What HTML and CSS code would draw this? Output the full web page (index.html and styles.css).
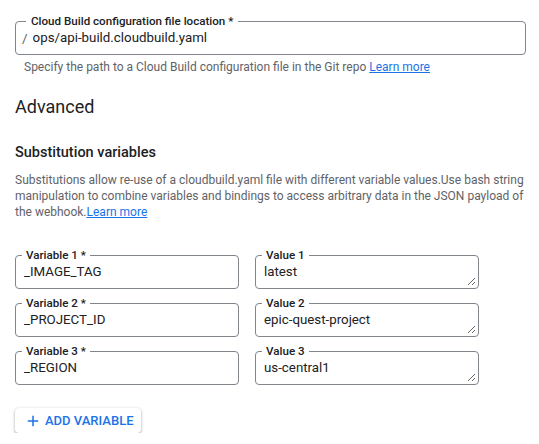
FILE: index.html
```html
<!DOCTYPE html>
<html lang="en">
<head>
<meta charset="utf-8">
<title>Cloud Build trigger – Advanced</title>
<link rel="stylesheet" href="styles.css">
</head>
<body>
<main class="page">
  <fieldset class="field field-wide">
    <legend class="field-label">Cloud Build configuration file location *</legend>
    <div class="input-row">
      <span class="prefix">/</span>
      <input class="field-input" type="text" value="ops/api-build.cloudbuild.yaml">
    </div>
  </fieldset>
  <p class="hint">Specify the path to a Cloud Build configuration file in the Git repo <a class="link" href="#">Learn more</a></p>

  <h2 class="section-title">Advanced</h2>
  <h3 class="subsection-title">Substitution variables</h3>
  <p class="desc">Substitutions allow re-use of a cloudbuild.yaml file with different variable values.Use bash string manipulation to combine variables and bindings to access arbitrary data in the JSON payload of the webhook.<a class="link" href="#">Learn more</a></p>

  <div class="vars">
    <fieldset class="field field-var">
      <legend class="field-label">Variable 1 *</legend>
      <input class="field-input" type="text" value="_IMAGE_TAG">
    </fieldset>
    <fieldset class="field field-val">
      <legend class="field-label">Value 1</legend>
      <textarea class="field-area" rows="1">latest</textarea>
    </fieldset>
    <fieldset class="field field-var">
      <legend class="field-label">Variable 2 *</legend>
      <input class="field-input" type="text" value="_PROJECT_ID">
    </fieldset>
    <fieldset class="field field-val">
      <legend class="field-label">Value 2</legend>
      <textarea class="field-area" rows="1">epic-quest-project</textarea>
    </fieldset>
    <fieldset class="field field-var">
      <legend class="field-label">Variable 3 *</legend>
      <input class="field-input" type="text" value="_REGION">
    </fieldset>
    <fieldset class="field field-val">
      <legend class="field-label">Value 3</legend>
      <textarea class="field-area" rows="1">us-central1</textarea>
    </fieldset>
  </div>

  <button class="add-btn" type="button">
    <svg class="add-icon" viewBox="0 0 24 24" width="18" height="18" aria-hidden="true"><path d="M19 13h-6v6h-2v-6H5v-2h6V5h2v6h6v2z" fill="currentColor"/></svg>
    <span>ADD VARIABLE</span>
  </button>
</main>
</body>
</html>
```

FILE: styles.css
```css
* { box-sizing: border-box; }

html, body {
  margin: 0;
  background: #ffffff;
}

body {
  font-family: Roboto, "Liberation Sans", Arial, sans-serif;
  color: #202124;
}

.page {
  padding: 14px 0 0 15px;
  display: flex;
  flex-direction: column;
  align-items: flex-start;
}

.field {
  margin: 0;
  min-width: 0;
  border: 1px solid #80868b;
  border-radius: 4px;
  padding: 0 2px 6px 8px;
}

.field-label {
  font-size: 11.6px;
  line-height: 14px;
  font-weight: 500;
  color: #202124;
  padding: 0 4px;
  margin-left: -2px;
}

.field-wide {
  width: 511px;
  padding-left: 6px;
}

.field-wide .field-label {
  margin-left: 4px;
  padding: 0 5px;
}

.input-row {
  display: flex;
  align-items: center;
  gap: 5px;
}

.prefix {
  font-size: 13.5px;
  line-height: 20px;
  color: #5f6368;
}

.field-input,
.field-area {
  display: block;
  width: 100%;
  border: 0;
  outline: 0;
  margin: 0;
  padding: 0;
  background: transparent;
  font-family: inherit;
  font-size: 13.3px;
  line-height: 20px;
  height: 20px;
  color: #202124;
}

.input-row .field-input { flex: 1; }

.field-val {
  padding-bottom: 2px;
}

.field-area {
  height: 24px;
  padding-bottom: 4px;
  resize: vertical;
  overflow: hidden;
}

.hint {
  margin: 4px 0 0 9px;
  font-size: 12px;
  line-height: 16px;
  color: #5f6368;
}

.link {
  color: #1a73e8;
  text-decoration: underline;
}

.section-title {
  margin: 20px 0 0;
  font-size: 18px;
  line-height: 24px;
  font-weight: 400;
  color: #202124;
}

.subsection-title {
  margin: 24px 0 0;
  font-size: 14.5px;
  line-height: 20px;
  font-weight: 500;
  color: #202124;
}

.desc {
  margin: 9px 0 0;
  width: 512px;
  font-size: 12px;
  line-height: 16px;
  color: #5f6368;
}

.vars {
  margin-top: 28px;
  display: grid;
  grid-template-columns: 224px 224px;
  column-gap: 16px;
  row-gap: 7px;
}

.add-btn {
  margin-top: 23px;
  height: 25px;
  display: inline-flex;
  align-items: center;
  gap: 3px;
  padding: 0 7px 0 9px;
  border: 0;
  border-radius: 4px;
  background: #ffffff;
  color: #1a73e8;
  font-family: inherit;
  font-size: 13px;
  font-weight: 500;
  box-shadow: 0 1px 2px rgba(60, 64, 67, 0.3), 0 1px 3px 1px rgba(60, 64, 67, 0.15);
}

.add-icon { display: block; }
```
